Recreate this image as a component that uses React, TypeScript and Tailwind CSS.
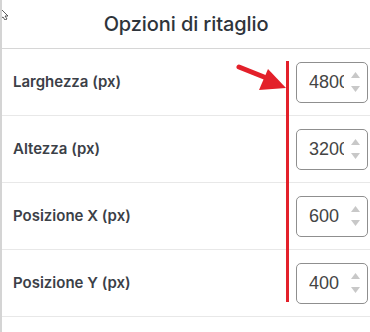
import React from "react";

type Field = { label: string; value: string };

const fields: Field[] = [
  { label: "Larghezza (px)", value: "4800" },
  { label: "Altezza (px)", value: "3200" },
  { label: "Posizione X (px)", value: "600" },
  { label: "Posizione Y (px)", value: "400" },
];

function NumberBox({ value }: { value: string }) {
  return (
    <div className="flex items-center h-[41px] w-[72px] rounded-[5px] border border-[#8f8f8f] bg-white pl-[12px] pr-[7px]">
      <span
        className="w-[35px] overflow-hidden whitespace-nowrap text-[18px] text-[#444] leading-none"
        style={{ fontFamily: '"Liberation Sans", Arial, sans-serif' }}
      >
        {value}
      </span>
      <div className="ml-auto flex flex-col items-center gap-[8px]">
        <svg width="9" height="6" viewBox="0 0 9 6">
          <path d="M4.5 0 L9 6 L0 6 Z" fill="#c8c8c8" />
        </svg>
        <svg width="9" height="6" viewBox="0 0 9 6">
          <path d="M0 0 L9 0 L4.5 6 Z" fill="#c8c8c8" />
        </svg>
      </div>
    </div>
  );
}

export default function App() {
  return (
    <div
      className="relative w-[370px] h-[332px] overflow-hidden bg-white border-l-2 border-[#d4d4d4]"
      style={{ fontFamily: "Inter, 'Noto Sans', sans-serif" }}
    >
      <div className="h-[49px] flex items-center justify-center border-b border-[#d6d6d6]">
        <h2 className="text-[20px] font-medium text-[#2e343b] tracking-[-0.1px]">Opzioni di ritaglio</h2>
      </div>
      {fields.map((f) => (
        <div key={f.label} className="h-[67px] flex items-center justify-between pl-[11px] pr-[2px] border-b border-[#e8e8e8]">
          <span className="text-[15px] font-semibold text-[#3b4047]">{f.label}</span>
          <NumberBox value={f.value} />
        </div>
      ))}

      {/* annotation overlay */}
      <div className="absolute left-[284px] top-[61px] w-[3px] h-[241px] bg-[#e3202a]" />
      <svg className="absolute left-0 top-0" width="370" height="332" viewBox="0 0 370 332">
        <path d="M237 67 L262 77" stroke="#e3202a" strokeWidth="5" strokeLinecap="round" />
        <path d="M266 69 L284 88 L257 90 Z" fill="#e3202a" />
      </svg>
      <svg className="absolute left-0 top-[8px]" width="8" height="12" viewBox="0 0 8 12">
        <path d="M-2 0 L6 8 L3 8 L5 11 L3 12 L1 9 L-2 11 Z" fill="white" stroke="#333" strokeWidth="0.8" />
      </svg>
    </div>
  );
}
